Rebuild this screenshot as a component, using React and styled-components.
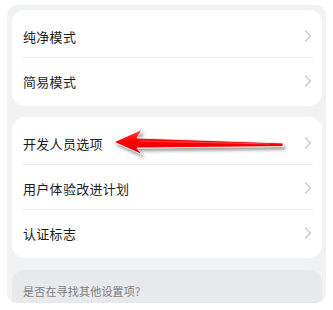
import React from "react";
import styled, { createGlobalStyle } from "styled-components";

const Global = createGlobalStyle`
  html, body { margin: 0; padding: 0; background: #ffffff; }
  body { font-family: "Noto Sans CJK SC", "Noto Sans", sans-serif; }
  * { box-sizing: border-box; }
`;

const Page = styled.div`
  position: relative;
  width: 333px;
  height: 310px;
  padding: 5px 7px 0 7px;
`;

const Panel = styled.div`
  height: 298px;
  background: #f1f2f4;
  border-radius: 10px;
  padding: 5px 4px 0 5px;
  display: flex;
  flex-direction: column;
  gap: 11px;
  overflow: hidden;
`;

const Card = styled.div`
  background: #ffffff;
  border-radius: 13px;
  padding: 3px 0;
  display: flex;
  flex-direction: column;
`;

const Row = styled.div`
  height: 45px;
  display: flex;
  align-items: center;
  justify-content: space-between;
  padding: 0 10px 0 11px;
  position: relative;
  ${(p) =>
    p.$divider &&
    `
    &::after {
      content: "";
      position: absolute;
      left: 11px;
      right: 9px;
      bottom: 0;
      height: 1px;
      background: #ebebed;
    }
  `}
`;

const Label = styled.span`
  font-size: 13px;
  color: #1c1c1e;
  letter-spacing: 0.3px;
  line-height: 1;
  padding-top: 1px;
`;

const HintCard = styled.div`
  margin-top: 1px;
  background: #e8e9eb;
  border-radius: 13px 13px 0 0;
  flex: 1;
  padding: 14px 11px 0 11px;
`;

const Hint = styled.div`
  font-size: 11px;
  line-height: 14px;
  color: #7c7d80;
  letter-spacing: 0.2px;
`;

const ArrowSvg = styled.svg`
  position: absolute;
  left: 100px;
  top: 120px;
  overflow: visible;
`;

const Chevron = () => (
  <svg width="8" height="12" viewBox="0 0 8 12">
    <path d="M1.5 1 L6.5 6 L1.5 11" fill="none" stroke="#c7c7cc" strokeWidth="1.3" strokeLinecap="round" strokeLinejoin="round" />
  </svg>
);

const Item = ({ label, divider }) => (
  <Row $divider={divider}>
    <Label>{label}</Label>
    <Chevron />
  </Row>
);

export default function App() {
  return (
    <>
      <Global />
      <Page>
        <Panel>
          <Card>
            <Item label="纯净模式" divider />
            <Item label="简易模式" />
          </Card>
          <Card>
            <Item label="开发人员选项" divider />
            <Item label="用户体验改进计划" divider />
            <Item label="认证标志" />
          </Card>
          <HintCard>
            <Hint>是否在寻找其他设置项?</Hint>
          </HintCard>
        </Panel>
        <ArrowSvg width="200" height="45" viewBox="100 120 200 45">
          <defs>
            <linearGradient id="rg" x1="0" y1="0" x2="0" y2="1">
              <stop offset="0" stopColor="#ff4a4a" />
              <stop offset="0.45" stopColor="#ff0000" />
              <stop offset="1" stopColor="#d80000" />
            </linearGradient>
            <filter id="sh" x="-10%" y="-50%" width="120%" height="200%">
              <feDropShadow dx="2" dy="3" stdDeviation="1.8" floodColor="#555" floodOpacity="0.55" />
            </filter>
          </defs>
          <polygon
            points="114,142 142,129.5 137,138 283,143 283,146.5 137,148 142,154.5"
            fill="url(#rg)"
            stroke="#ffffff"
            strokeWidth="0.8"
            strokeLinejoin="round"
            filter="url(#sh)"
          />
          <path d="M140 141 L270 144" stroke="#ff7a7a" strokeWidth="1" opacity="0.6" />
        </ArrowSvg>
      </Page>
    </>
  );
}
